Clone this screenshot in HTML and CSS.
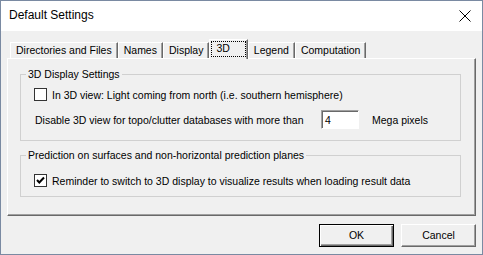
FILE: index.html
```html
<html>
<head>
    <title>Default Settings</title>
    <link rel="stylesheet" href="styles.css">
</head>
<body>
<div class="dialog">
    <div class="titlebar">
        <span class="title">Default Settings</span>
        <svg class="close" width="12" height="12" viewBox="0 0 12 12">
            <path d="M0.5 0.5 L11.5 11.5 M11.5 0.5 L0.5 11.5" stroke="#000" stroke-width="1" fill="none"/>
        </svg>
    </div>
    <div class="content">
        <div class="tabs">
            <div class="tab t-dirs">Directories and Files</div>
            <div class="tab t-names">Names</div>
            <div class="tab t-display">Display</div>
            <div class="tab active"><span class="focus">3D</span></div>
            <div class="tab t-legend">Legend</div>
            <div class="tab t-comp">Computation</div>
        </div>
        <div class="panel">
            <fieldset class="group g1">
                <legend>3D Display Settings</legend>
                <div class="row check-row">
                    <span class="box"></span>
                    <span>In 3D view: Light coming from north (i.e. southern hemisphere)</span>
                </div>
                <div class="row input-row">
                    <span class="lbl">Disable 3D view for topo/clutter databases with more than</span>
                    <span class="field">4</span>
                    <span>Mega pixels</span>
                </div>
            </fieldset>
            <fieldset class="group g2">
                <legend>Prediction on surfaces and non-horizontal prediction planes</legend>
                <div class="row check-row">
                    <span class="box">
                        <svg width="11" height="11" viewBox="0 0 11 11">
                            <path d="M2 5 L4.3 7.5 L9 2.5" stroke="#000" stroke-width="2" fill="none"/>
                        </svg>
                    </span>
                    <span>Reminder to switch to 3D display to visualize results when loading result data</span>
                </div>
            </fieldset>
        </div>
        <div class="buttons">
            <div class="btn default">OK</div>
            <div class="btn">Cancel</div>
        </div>
    </div>
</div>
</body>
</html>
```

FILE: styles.css
```css
body { margin: 0; font-family: "Liberation Sans", Arial, sans-serif; font-size: 10.5px; color: #000; }
.dialog { width: 481px; height: 253px; border: 1px solid #7a8aa2; background: #f0f0f0; }
.titlebar { height: 30px; background: #fff; display: flex; align-items: center; justify-content: space-between; padding: 0 11px 0 8px; }
.title { font-size: 12px; padding-bottom: 2px; }
.close { display: block; margin-bottom: 1px; }

.content { padding: 8px 6px 0 6px; }
.tabs { display: flex; align-items: flex-end; height: 19px; padding-left: 3px; position: relative; z-index: 1; }
.tab { height: 16px; line-height: 15px; padding: 0 5px; box-sizing: border-box; border-top: 1px solid #fff; border-left: 1px solid #fff; border-right: 1px solid #696969; box-shadow: inset -1px 0 #a0a0a0; white-space: nowrap; }
.tab.active { height: 20px; margin-bottom: -1px; padding: 1px 1px 2px 1px; background: #f0f0f0; }
.focus { display: block; height: 16px; line-height: 14px; padding: 0 16px 0 5px; box-sizing: border-box; outline: 1px dotted #000; outline-offset: -1px; }

.panel { height: 158px; box-sizing: border-box; border-top: 1px solid #fff; border-left: 1px solid #fff; border-right: 1px solid #696969; border-bottom: 1px solid #696969; box-shadow: inset -1px -1px #a0a0a0; padding: 9px 14px 0 12px; }

.group { margin: 0; border: 1px solid #d0d0d0; padding: 7px 10px 11px 13px; }
.group legend { padding: 0 2px; margin-left: -8px; line-height: 13px; }
.g2 { margin-top: 8px; padding-top: 12px; padding-bottom: 9px; }

.row { display: flex; align-items: center; white-space: nowrap; }
.check-row { height: 13px; }
.box { width: 13px; height: 13px; box-sizing: border-box; border: 1px solid #333; background: #fff; margin-right: 5px; display: flex; }
.box svg { display: block; }
.input-row { height: 19px; margin-top: 9px; padding-left: 1px; }
.lbl { width: 286px; }
.field { width: 38px; height: 19px; box-sizing: border-box; background: #fff; border-top: 1px solid #a0a0a0; border-left: 1px solid #a0a0a0; border-right: 1px solid #fff; border-bottom: 1px solid #fff; box-shadow: inset 1px 1px #696969; padding: 2px 0 0 3px; line-height: 14px; margin-right: 13px; }

.buttons { display: flex; justify-content: flex-end; gap: 7px; margin-top: 8px; }
.btn { width: 75px; height: 23px; box-sizing: border-box; text-align: center; line-height: 20px; background: #f0f0f0; border-top: 1px solid #fff; border-left: 1px solid #fff; border-right: 1px solid #696969; border-bottom: 1px solid #696969; box-shadow: inset -1px -1px #a0a0a0; }
.btn.default { border: 1px solid #000; box-shadow: inset 1px 1px #fff, inset -1px -1px #696969, inset -2px -2px #a0a0a0; line-height: 21px; }
```
